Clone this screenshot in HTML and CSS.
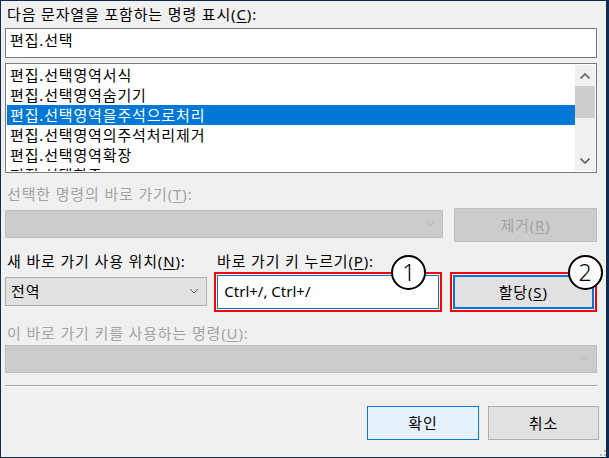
FILE: index.html
```html
<!DOCTYPE html>
<html lang="ko">
<head>
  <meta charset="UTF-8" />
  <title>키보드 바로 가기</title>
  <link rel="stylesheet" href="styles.css">
</head>
<body>
  <div class="dialog">
    <div class="caption">다음 문자열을 포함하는 명령 표시(<u>C</u>):</div>
    <div class="textbox search">편집.선택</div>

    <div class="listbox">
      <ul class="items">
        <li>편집.선택영역서식</li>
        <li>편집.선택영역숨기기</li>
        <li class="selected">편집.선택영역을주석으로처리</li>
        <li>편집.선택영역의주석처리제거</li>
        <li>편집.선택영역확장</li>
        <li>편집.선택한줄</li>
      </ul>
      <div class="scrollbar">
        <div class="sb-btn">
          <svg width="10" height="6" viewBox="0 0 10 6"><path d="M0.5 5.5L5 1l4.5 4.5" fill="none" stroke="#606060" stroke-width="1.6"/></svg>
        </div>
        <div class="sb-thumb"></div>
        <div class="sb-track"></div>
        <div class="sb-btn">
          <svg width="10" height="6" viewBox="0 0 10 6"><path d="M0.5 0.5L5 5l4.5-4.5" fill="none" stroke="#606060" stroke-width="1.6"/></svg>
        </div>
      </div>
    </div>

    <div class="caption disabled gap-top">선택한 명령의 바로 가기(<u>T</u>):</div>
    <div class="row current">
      <div class="combo disabled wide">
        <span></span>
        <svg class="chev" width="10" height="6" viewBox="0 0 10 6"><path d="M1 1l4 4 4-4" fill="none" stroke="currentColor"/></svg>
      </div>
      <button class="btn disabled remove">제거(<u>R</u>)</button>
    </div>

    <div class="row labels">
      <div class="caption scope-label">새 바로 가기 사용 위치(<u>N</u>):</div>
      <div class="caption key-label">바로 가기 키 누르기(<u>P</u>):</div>
    </div>
    <div class="row assign">
      <div class="combo scope">
        <span>전역</span>
        <svg class="chev" width="10" height="6" viewBox="0 0 10 6"><path d="M1 1l4 4 4-4" fill="none" stroke="currentColor"/></svg>
      </div>
      <div class="mark key-mark">
        <div class="textbox keys">Ctrl+/, Ctrl+/</div>
        <span class="badge">1</span>
      </div>
      <div class="mark btn-mark">
        <button class="btn focused">할당(<u>S</u>)</button>
        <span class="badge">2</span>
      </div>
    </div>

    <div class="caption disabled used-label">이 바로 가기 키를 사용하는 명령(<u>U</u>):</div>
    <div class="combo disabled full">
      <span></span>
      <svg class="chev" width="10" height="6" viewBox="0 0 10 6"><path d="M1 1l4 4 4-4" fill="none" stroke="currentColor"/></svg>
    </div>

    <hr class="separator" />

    <div class="row footer">
      <button class="btn default">확인</button>
      <button class="btn">취소</button>
    </div>

    <svg class="grip" width="7" height="7" viewBox="0 0 7 7">
      <rect x="5" y="1" width="2" height="2" fill="#b8b8b8"/>
      <rect x="5" y="5" width="2" height="2" fill="#b8b8b8"/>
      <rect x="1" y="5" width="2" height="2" fill="#b8b8b8"/>
    </svg>
  </div>
</body>
</html>
```

FILE: styles.css
```css
* {
  box-sizing: border-box;
  margin: 0;
  padding: 0;
}
body {
  background: #f0f0f0;
  font-family: "Noto Sans", "Noto Sans CJK KR", sans-serif;
  font-size: 15px;
  letter-spacing: 0.85px;
  color: #000;
}
u {
  text-decoration-thickness: 1px;
  text-underline-offset: 2px;
}
.dialog {
  position: relative;
  width: 609px;
  height: 458px;
  border: 1px solid #0f2b4d;
  border-right-width: 3px;
  padding: 3px 9px 0 4px;
  display: flex;
  flex-direction: column;
}
.caption {
  height: 20px;
  line-height: 20px;
  padding-left: 2px;
  white-space: nowrap;
}
.caption.disabled {
  color: #a3a3a3;
}
.gap-top {
  margin-top: 11px;
}
.textbox {
  background: #fff;
  border: 1px solid #7a7a7a;
  line-height: 20px;
  white-space: nowrap;
}
.search {
  margin-top: 4px;
  height: 30px;
  padding: 1px 4px;
}
.listbox {
  margin-top: 5px;
  height: 110px;
  background: #fff;
  border: 1px solid #7a7a7a;
  padding: 1px;
  display: flex;
}
.items {
  list-style: none;
  flex: 1;
  overflow: hidden;
}
.items li {
  height: 20px;
  line-height: 20px;
  padding-left: 3px;
  white-space: nowrap;
}
.items li.selected {
  background: #0078d7;
  color: #fff;
}
.scrollbar {
  width: 20px;
  background: #f0f0f0;
  display: flex;
  flex-direction: column;
}
.sb-btn {
  height: 21px;
  display: flex;
  align-items: center;
  justify-content: center;
}
.sb-thumb {
  height: 32px;
  background: #cdcdcd;
}
.sb-track {
  flex: 1;
}
.row {
  display: flex;
}
.current {
  margin-top: 4px;
  align-items: flex-start;
}
.combo {
  display: flex;
  align-items: center;
  justify-content: space-between;
  background: #e1e1e1;
  border: 1px solid #adadad;
  padding: 0 7px 1px 5px;
  line-height: 20px;
  color: #000;
}
.combo .chev {
  color: #606060;
}
.combo.disabled {
  background: #cccccc;
  border-color: #bfbfbf;
}
.combo.disabled .chev {
  color: #b4b4b4;
}
.combo.wide {
  width: 438px;
  height: 28px;
  margin-top: 2px;
}
.btn {
  font: inherit;
  letter-spacing: inherit;
  line-height: 20px;
  background: #e1e1e1;
  border: 1px solid #adadad;
  color: #000;
  height: 34px;
}
.btn.disabled {
  background: #cccccc;
  border-color: #bfbfbf;
  color: #a3a3a3;
}
.remove {
  width: 143px;
  margin-left: 11px;
}
.labels {
  margin-top: 9px;
}
.scope-label {
  width: 210px;
}
.assign {
  margin-top: 1px;
  align-items: flex-start;
}
.combo.scope {
  width: 203px;
  height: 29px;
  margin-top: 5px;
}
.mark {
  position: relative;
  border: 2px solid #ff0000;
  padding: 1px;
  height: 40px;
}
.key-mark {
  width: 228px;
  margin-left: 7px;
}
.btn-mark {
  width: 148px;
  margin-left: 8px;
}
.keys {
  height: 34px;
  border-color: #0078d7;
  padding: 5px 6px;
  letter-spacing: 0;
}
.btn.focused {
  width: 100%;
  border: 2px solid #0078d7;
}
.badge {
  position: absolute;
  top: -19px;
  width: 35px;
  height: 35px;
  border: 2px solid #000;
  border-radius: 50%;
  background: #fff;
  font-size: 23px;
  font-weight: 300;
  letter-spacing: 0;
  line-height: 31px;
  text-align: center;
}
.key-mark .badge {
  left: 175px;
}
.btn-mark .badge {
  left: 116px;
}
.used-label {
  margin-top: 11px;
}
.combo.full {
  width: 592px;
  height: 28px;
  margin-top: 2px;
}
.separator {
  margin-top: 12px;
  width: 592px;
  border: none;
  border-top: 1px solid #a0a0a0;
  border-bottom: 1px solid #fff;
}
.footer {
  margin-top: 19px;
  justify-content: flex-end;
  margin-right: -2px;
  gap: 9px;
}
.footer .btn {
  width: 111px;
}
.btn.default {
  width: 112px;
  background: #e5f1fb;
  border-color: #0078d7;
}
.grip {
  position: absolute;
  right: 0;
  bottom: 1px;
}
```
